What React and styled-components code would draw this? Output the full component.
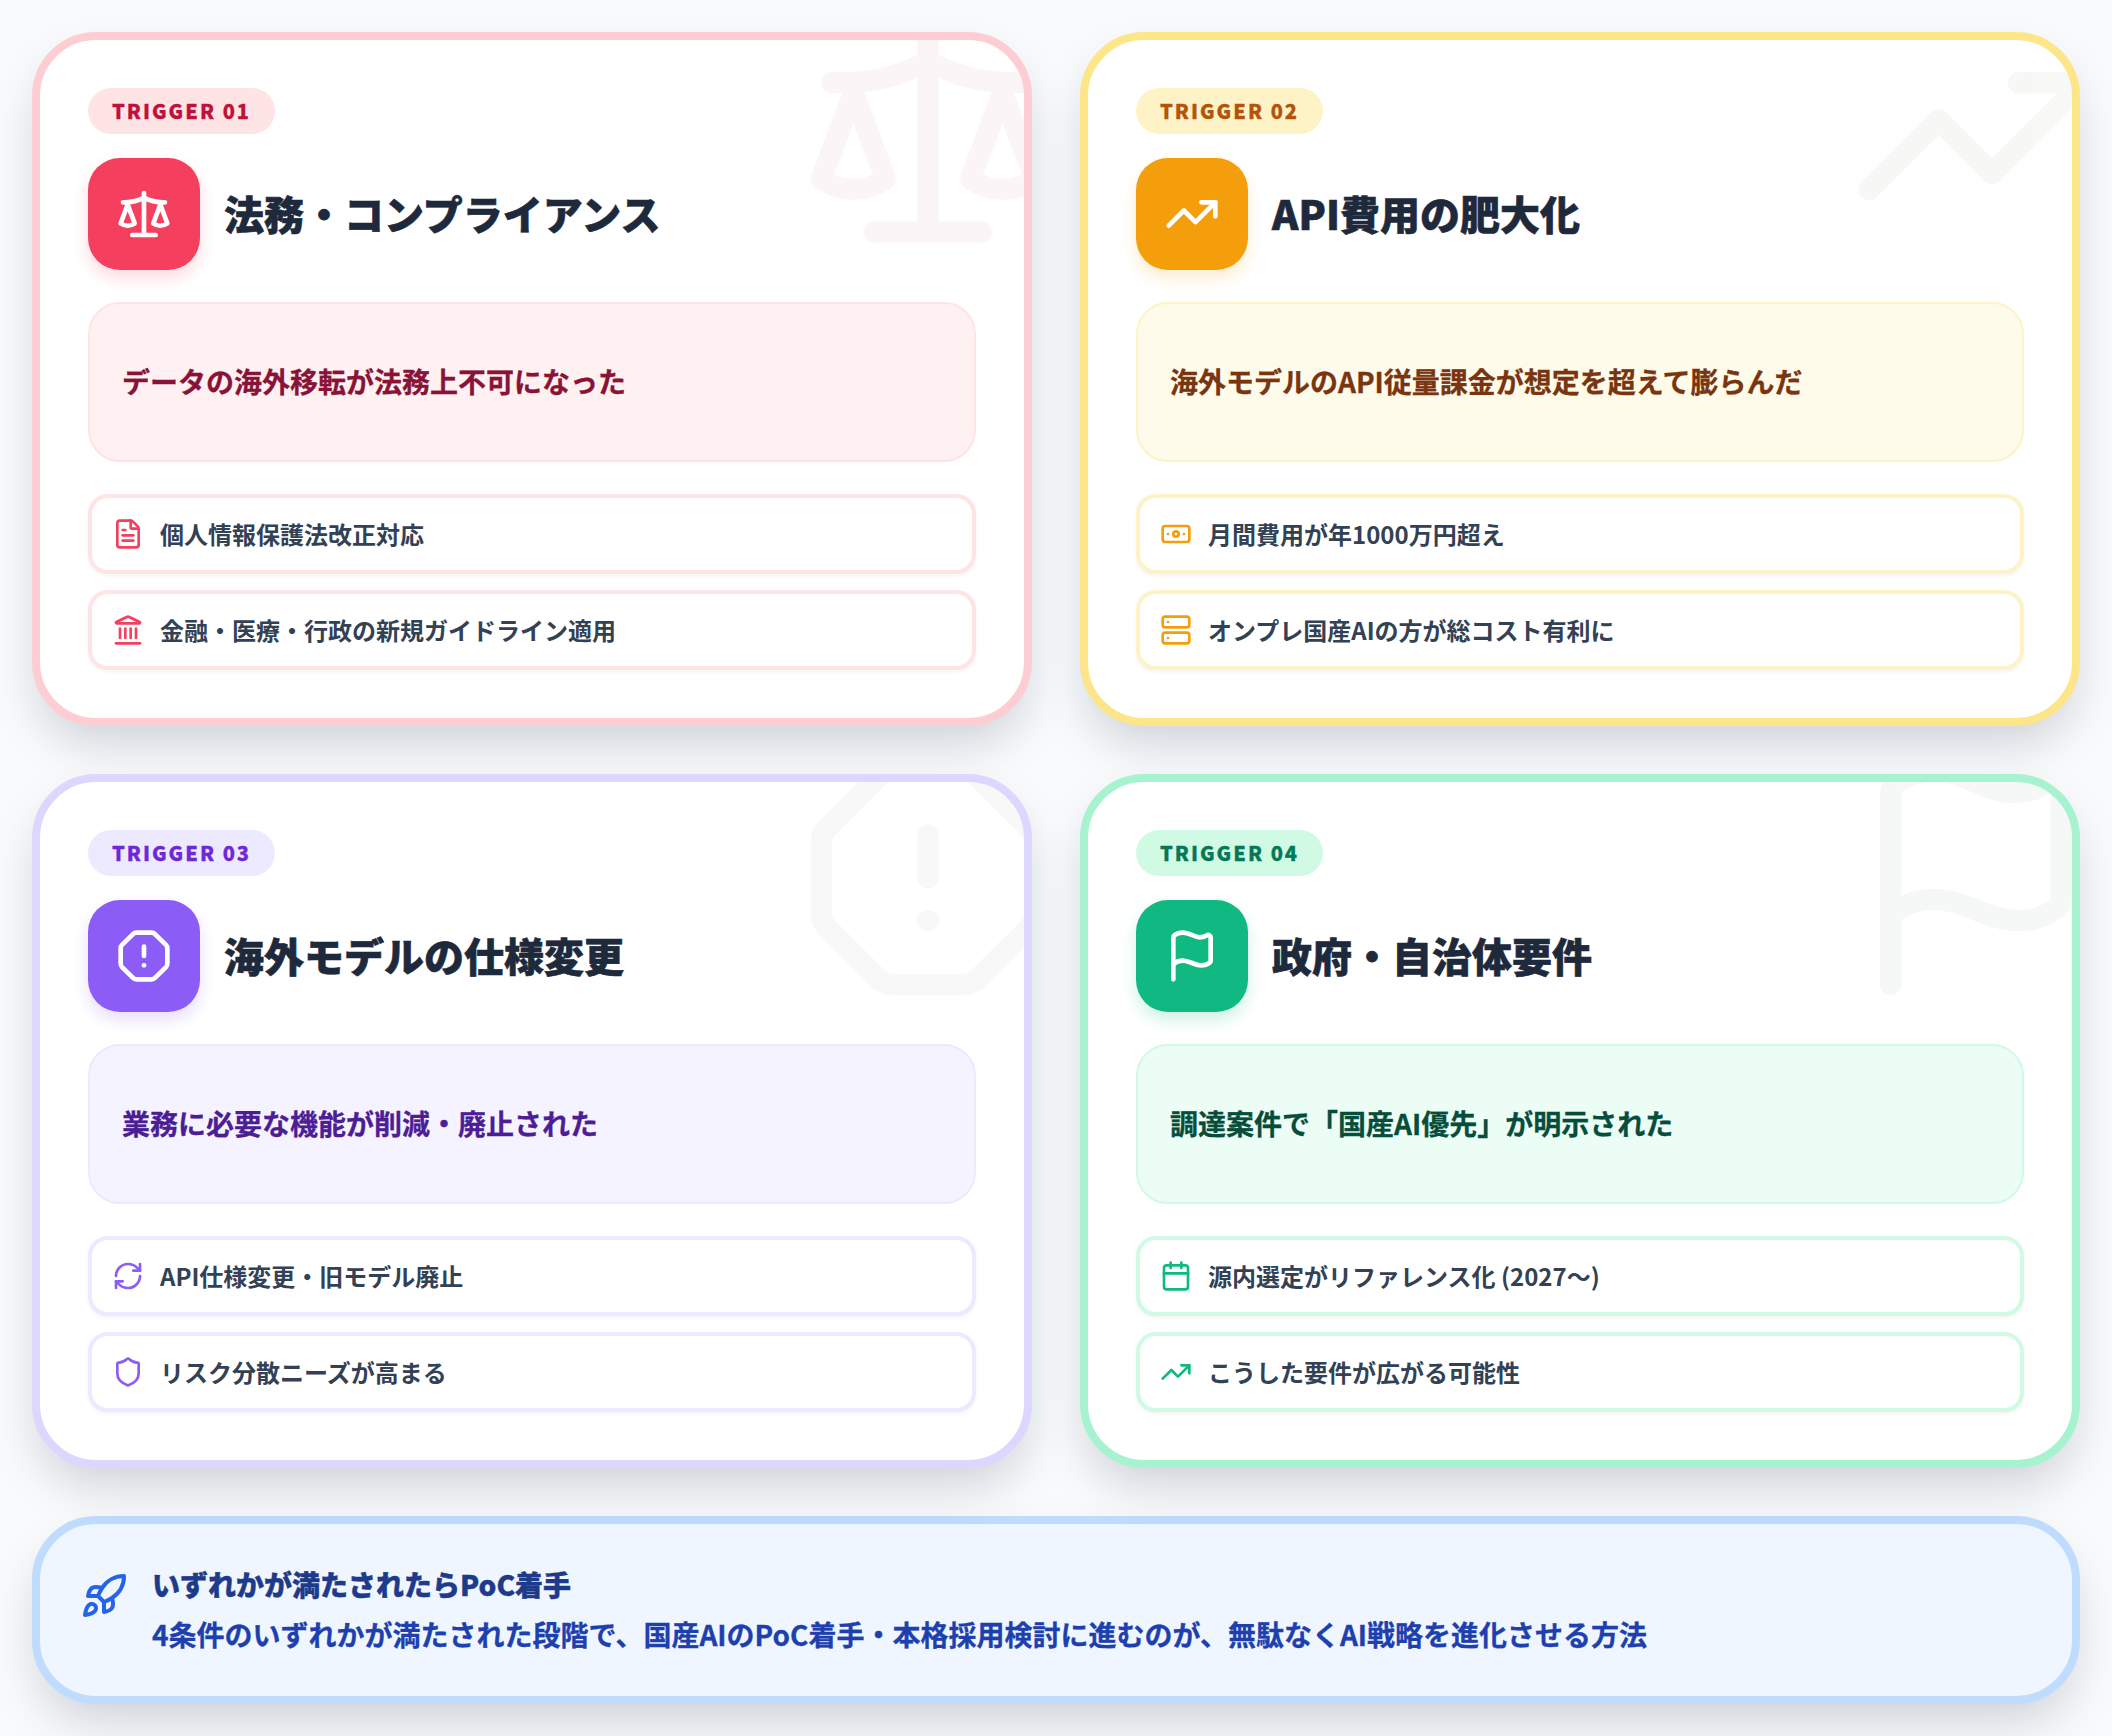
import React from "react";
import styled, { createGlobalStyle } from "styled-components";
import {
  Scale,
  TrendingUp,
  OctagonAlert,
  Flag,
  FileText,
  Landmark,
  Banknote,
  Server,
  RefreshCw,
  Shield,
  Calendar,
  Rocket,
} from "lucide-react";

const GlobalStyle = createGlobalStyle`
  * { box-sizing: border-box; }
  html, body { margin: 0; padding: 0; }
  body {
    background: #f8fafc;
    font-family: "Noto Sans CJK JP", "Noto Sans", sans-serif;
  }
`;

const Page = styled.div`
  width: 2112px;
  height: 1736px;
  padding: 32px;
  display: flex;
  flex-direction: column;
  gap: 48px;
  background: #f8fafc;
`;

const Grid = styled.div`
  display: grid;
  grid-template-columns: 1000px 1000px;
  grid-auto-rows: 694px;
  gap: 48px;
`;

const Card = styled.section`
  position: relative;
  overflow: hidden;
  display: flex;
  flex-direction: column;
  padding: 48px;
  background: #fff;
  border: 8px solid ${({ $c }) => $c.border};
  border-radius: 64px;
  box-shadow: 0 24px 48px -8px rgba(15, 23, 42, 0.18);
`;

const Watermark = styled.div`
  position: absolute;
  top: -32px;
  right: -32px;
  width: 256px;
  height: 256px;
  color: ${({ $c }) => $c.mark};
  opacity: 0.04;
`;

const Badge = styled.span`
  align-self: flex-start;
  padding: 8px 24px;
  border-radius: 9999px;
  background: ${({ $c }) => $c.badgeBg};
  color: ${({ $c }) => $c.badgeText};
  font-size: 20px;
  font-weight: 900;
  line-height: 30px;
  letter-spacing: 2px;
  -webkit-text-stroke: 0.3px currentColor;
`;

const Head = styled.div`
  display: flex;
  align-items: center;
  gap: 24px;
  margin-top: 24px;
`;

const Tile = styled.div`
  flex: none;
  width: 112px;
  height: 112px;
  display: flex;
  align-items: center;
  justify-content: center;
  border-radius: 32px;
  color: #fff;
  background: ${({ $c }) => $c.main};
  box-shadow: 0 8px 16px ${({ $c }) => $c.glow};
`;

const Title = styled.h2`
  margin: 0 0 2px;
  font-size: 40px;
  font-weight: 900;
  line-height: 1.5;
  color: #1e293b;
  -webkit-text-stroke: 0.6px currentColor;
`;

const Lead = styled.div`
  display: flex;
  align-items: center;
  height: 160px;
  margin-top: 32px;
  padding: 0 32px 2px;
  border: 2px solid ${({ $c }) => $c.soft};
  border-radius: 32px;
  background: ${({ $c }) => $c.leadBg};
  color: ${({ $c }) => $c.leadText};
  font-size: 28px;
  font-weight: 700;
  line-height: 1.5;
  -webkit-text-stroke: 0.3px currentColor;
`;

const Rows = styled.div`
  display: flex;
  flex-direction: column;
  gap: 16px;
  margin-top: 32px;
`;

const Row = styled.div`
  display: flex;
  align-items: center;
  gap: 16px;
  height: 80px;
  padding: 0 20px;
  border: 4px solid ${({ $c }) => $c.soft};
  border-radius: 20px;
  background: #fff;
  box-shadow: 0 2px 4px rgba(15, 23, 42, 0.05);
  color: #334155;
  font-size: 24px;
  font-weight: 700;
  line-height: 1.5;
  svg {
    flex: none;
    color: ${({ $c }) => $c.main};
  }
`;

const Callout = styled.aside`
  display: flex;
  align-items: flex-start;
  gap: 24px;
  height: 188px;
  padding: 39px 40px;
  border: 8px solid #bfdbfe;
  border-radius: 64px;
  background: #eff6ff;
  box-shadow: 0 24px 48px -8px rgba(15, 23, 42, 0.18);
  svg {
    flex: none;
    margin-top: 9px;
    color: #2563eb;
  }
`;

const CalloutBody = styled.div`
  display: flex;
  flex-direction: column;
  gap: 8px;
  font-size: 28px;
  line-height: 1.5;
`;

const CalloutTitle = styled.div`
  font-weight: 900;
  color: #1e3a8a;
  -webkit-text-stroke: 0.4px currentColor;
`;

const CalloutText = styled.div`
  font-weight: 700;
  color: #1e40af;
  -webkit-text-stroke: 0.3px currentColor;
`;

const rose = {
  border: "#fecdd3",
  badgeBg: "#ffe4e6",
  badgeText: "#be123c",
  main: "#f43f5e",
  glow: "rgba(244, 63, 94, 0.2)",
  soft: "#ffe4e6",
  leadBg: "#fff1f2",
  leadText: "#881337",
  mark: "#a8123a",
};
const amber = {
  border: "#fde68a",
  badgeBg: "#fef3c7",
  badgeText: "#b45309",
  main: "#f59e0b",
  glow: "rgba(245, 158, 11, 0.2)",
  soft: "#fef3c7",
  leadBg: "#fffbeb",
  leadText: "#78350f",
  mark: "#5a4a3a",
};
const violet = {
  border: "#ddd6fe",
  badgeBg: "#ede9fe",
  badgeText: "#6d28d9",
  main: "#8b5cf6",
  glow: "rgba(139, 92, 246, 0.2)",
  soft: "#ede9fe",
  leadBg: "#f5f3ff",
  leadText: "#4c1d95",
  mark: "#4a4870",
};
const emerald = {
  border: "#a7f3d0",
  badgeBg: "#d1fae5",
  badgeText: "#047857",
  main: "#10b981",
  glow: "rgba(16, 185, 129, 0.2)",
  soft: "#d1fae5",
  leadBg: "#ecfdf5",
  leadText: "#064e3b",
  mark: "#2a4a40",
};

const triggers = [
  {
    no: "01",
    c: rose,
    Icon: Scale,
    title: "法務・コンプライアンス",
    lead: "データの海外移転が法務上不可になった",
    rows: [
      [FileText, "個人情報保護法改正対応"],
      [Landmark, "金融・医療・行政の新規ガイドライン適用"],
    ],
  },
  {
    no: "02",
    c: amber,
    Icon: TrendingUp,
    title: "API費用の肥大化",
    lead: "海外モデルのAPI従量課金が想定を超えて膨らんだ",
    rows: [
      [Banknote, "月間費用が年1000万円超え"],
      [Server, "オンプレ国産AIの方が総コスト有利に"],
    ],
  },
  {
    no: "03",
    c: violet,
    Icon: OctagonAlert,
    title: "海外モデルの仕様変更",
    lead: "業務に必要な機能が削減・廃止された",
    rows: [
      [RefreshCw, "API仕様変更・旧モデル廃止"],
      [Shield, "リスク分散ニーズが高まる"],
    ],
  },
  {
    no: "04",
    c: emerald,
    Icon: Flag,
    title: "政府・自治体要件",
    lead: "調達案件で「国産AI優先」が明示された",
    rows: [
      [Calendar, "源内選定がリファレンス化 (2027〜)"],
      [TrendingUp, "こうした要件が広がる可能性"],
    ],
  },
];

export default function App() {
  return (
    <Page>
      <GlobalStyle />
      <Grid>
        {triggers.map(({ no, c, Icon, title, lead, rows }) => (
          <Card key={no} $c={c}>
            <Watermark $c={c}>
              <Icon size={256} />
            </Watermark>
            <Badge $c={c}>TRIGGER {no}</Badge>
            <Head>
              <Tile $c={c}>
                <Icon size={56} />
              </Tile>
              <Title>{title}</Title>
            </Head>
            <Lead $c={c}>{lead}</Lead>
            <Rows>
              {rows.map(([RowIcon, text]) => (
                <Row key={text} $c={c}>
                  <RowIcon size={32} />
                  {text}
                </Row>
              ))}
            </Rows>
          </Card>
        ))}
      </Grid>
      <Callout>
        <Rocket size={48} />
        <CalloutBody>
          <CalloutTitle>いずれかが満たされたらPoC着手</CalloutTitle>
          <CalloutText>
            4条件のいずれかが満たされた段階で、国産AIのPoC着手・本格採用検討に進むのが、無駄なくAI戦略を進化させる方法
          </CalloutText>
        </CalloutBody>
      </Callout>
    </Page>
  );
}
